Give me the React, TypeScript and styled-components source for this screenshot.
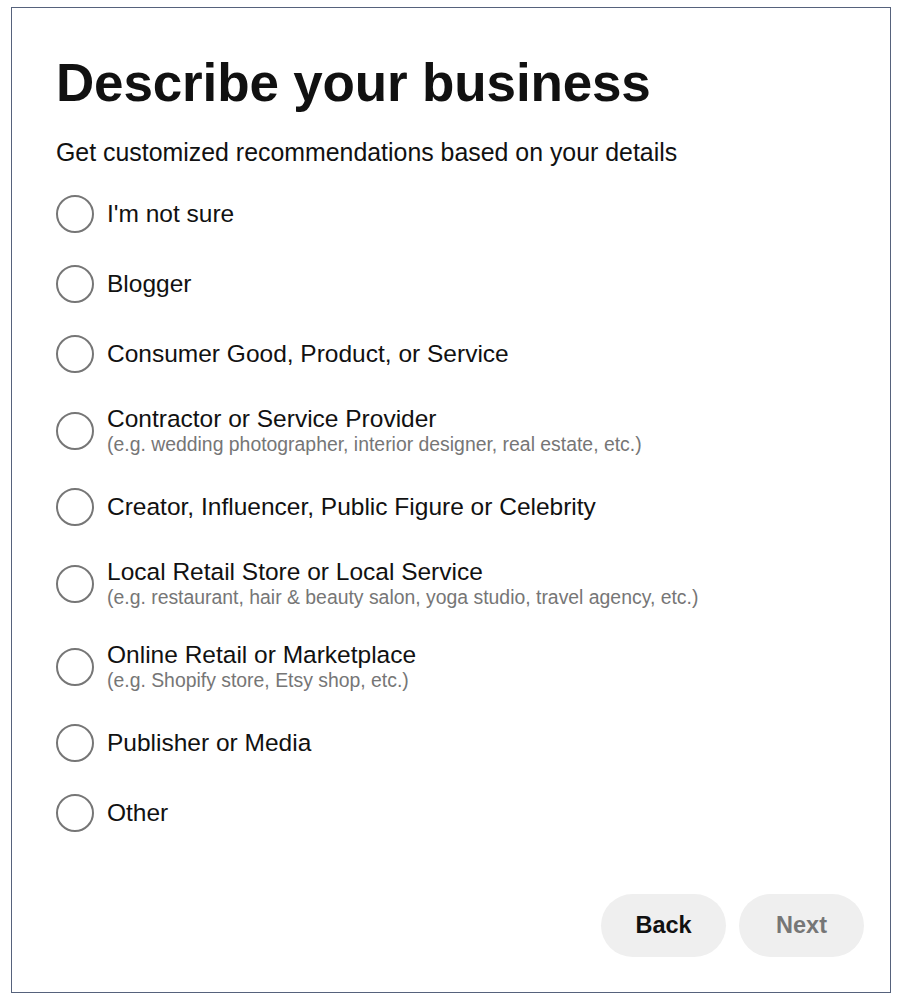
import styled, { createGlobalStyle } from 'styled-components';

const options = [
  { label: "I'm not sure" },
  { label: 'Blogger' },
  { label: 'Consumer Good, Product, or Service' },
  {
    label: 'Contractor or Service Provider',
    hint: '(e.g. wedding photographer, interior designer, real estate, etc.)',
  },
  { label: 'Creator, Influencer, Public Figure or Celebrity' },
  {
    label: 'Local Retail Store or Local Service',
    hint: '(e.g. restaurant, hair & beauty salon, yoga studio, travel agency, etc.)',
  },
  {
    label: 'Online Retail or Marketplace',
    hint: '(e.g. Shopify store, Etsy shop, etc.)',
  },
  { label: 'Publisher or Media' },
  { label: 'Other' },
];

export default function App() {
  return (
    <>
      <GlobalStyle />
      <Frame>
        <Title>Describe your business</Title>
        <Subtitle>Get customized recommendations based on your details</Subtitle>
        <OptionList>
          {options.map((o) => (
            <Option key={o.label}>
              <Radio />
              <LabelBlock>
                <Label>{o.label}</Label>
                {o.hint && <Hint>{o.hint}</Hint>}
              </LabelBlock>
            </Option>
          ))}
        </OptionList>
        <Footer>
          <PillButton>Back</PillButton>
          <PillButton $disabled>Next</PillButton>
        </Footer>
      </Frame>
    </>
  );
}

const GlobalStyle = createGlobalStyle`
  body {
    margin: 0;
    background: #ffffff;
    font-family: "Liberation Sans", Arial, sans-serif;
    color: #111111;
  }
`;

const Frame = styled.div`
  box-sizing: border-box;
  margin: 7px 0 0 11px;
  width: 880px;
  height: 986px;
  border: 1px solid #56627c;
  padding: 43px 26px 35px 44px;
  display: flex;
  flex-direction: column;
`;

const Title = styled.h1`
  margin: 0;
  font-size: 53px;
  line-height: 64px;
  font-weight: 700;
  letter-spacing: -0.15px;
`;

const Subtitle = styled.p`
  margin: 22px 0 0;
  font-size: 24.9px;
  line-height: 30px;
`;

const OptionList = styled.div`
  display: flex;
  flex-direction: column;
  gap: 32px;
  margin-top: 28px;
`;

const Option = styled.label`
  display: flex;
  align-items: center;
  gap: 13px;
  min-height: 38px;
  cursor: pointer;
`;

const Radio = styled.span`
  box-sizing: border-box;
  flex: none;
  width: 38px;
  height: 38px;
  border: 2.5px solid #767676;
  border-radius: 50%;
`;

const LabelBlock = styled.div`
  display: flex;
  flex-direction: column;
`;

const Label = styled.span`
  font-size: 24.5px;
  line-height: 28px;
`;

const Hint = styled.span`
  font-size: 19.4px;
  line-height: 23px;
  color: #767676;
`;

const Footer = styled.div`
  margin-top: auto;
  display: flex;
  justify-content: flex-end;
  gap: 13px;
`;

const PillButton = styled.button<{ $disabled?: boolean }>`
  width: 125px;
  height: 63px;
  border: none;
  border-radius: 32px;
  background: #efefef;
  font-family: "Liberation Sans", Arial, sans-serif;
  font-size: 23.5px;
  font-weight: 700;
  color: ${({ $disabled }) => ($disabled ? '#767676' : '#111111')};
  cursor: ${({ $disabled }) => ($disabled ? 'default' : 'pointer')};
`;
